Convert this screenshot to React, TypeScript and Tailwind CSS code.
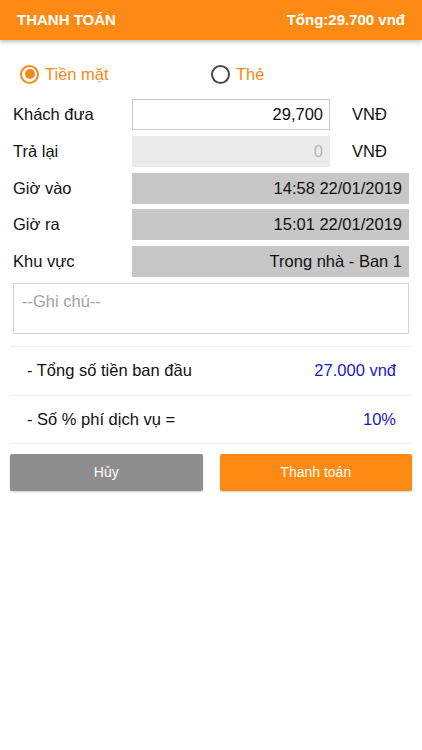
import React from "react";

function Radio({ checked, label }: { checked: boolean; label: string }) {
  return (
    <div className="flex items-center gap-[6px]">
      <div
        className={
          checked
            ? "w-[19px] h-[19px] rounded-full border-2 border-[#f8891b] flex items-center justify-center"
            : "w-[19px] h-[19px] rounded-full border-2 border-[#4a4a4a]"
        }
      >
        {checked && <div className="w-[10px] h-[10px] rounded-full bg-[#f8891b]" />}
      </div>
      <span className="text-[16.5px] text-[#f8891b]">{label}</span>
    </div>
  );
}

function Row({ label, children }: { label: string; children: React.ReactNode }) {
  return (
    <div className="flex items-center h-[31px]">
      <div className="w-[119px] text-[16.5px] text-[#111]">{label}</div>
      {children}
    </div>
  );
}

export default function App() {
  return (
    <div className="w-[422px] h-[750px] bg-white font-['Liberation_Sans',Arial,sans-serif] overflow-hidden">
      <div className="h-[40px] bg-[#fd8a14] flex items-center justify-between pl-[17px] pr-[17px] shadow-[0_2px_4px_rgba(0,0,0,0.25)] relative">
        <span className="text-white font-bold text-[15px]">THANH TOÁN</span>
        <span className="text-white font-bold text-[15px]">Tổng:29.700 vnđ</span>
      </div>

      <div className="flex items-center h-[20px] mt-[24px] pl-[20px]">
        <div className="w-[191px]">
          <Radio checked label="Tiền mặt" />
        </div>
        <Radio checked={false} label="Thẻ" />
      </div>

      <div className="flex flex-col gap-[5.75px] mt-[15px] pl-[13px] pr-[13px]">
        <Row label="Khách đưa">
          <div className="w-[198px] h-[31px] border border-[#c9c9c9] bg-white flex items-center justify-end pr-[6px] text-[16.5px] text-[#111]">
            29,700
          </div>
          <span className="ml-[22px] text-[16.5px] text-[#111]">VNĐ</span>
        </Row>
        <Row label="Trả lại">
          <div className="w-[198px] h-[31px] bg-[#ebebeb] flex items-center justify-end pr-[7px] text-[16.5px] text-[#b5b5b5]">
            0
          </div>
          <span className="ml-[22px] text-[16.5px] text-[#111]">VNĐ</span>
        </Row>
        <Row label="Giờ vào">
          <div className="flex-1 h-[31px] bg-[#c8c7c7] flex items-center justify-end pr-[7px] text-[16.5px] text-[#111]">
            14:58 22/01/2019
          </div>
        </Row>
        <Row label="Giờ ra">
          <div className="flex-1 h-[31px] bg-[#c8c7c7] flex items-center justify-end pr-[7px] text-[16.5px] text-[#111]">
            15:01 22/01/2019
          </div>
        </Row>
        <Row label="Khu vực">
          <div className="flex-1 h-[31px] bg-[#c8c7c7] flex items-center justify-end pr-[7px] text-[16.5px] text-[#111]">
            Trong nhà - Ban 1
          </div>
        </Row>
        <div className="h-[51px] border border-[#d4d4d4] pl-[8px] pt-[5px] text-[16.5px] text-[#a3a3a3]">
          --Ghi chú--
        </div>
      </div>

      <div className="mx-[10px] mt-[12px] border-t border-[#efefef]">
        <div className="h-[49px] flex items-center justify-between pl-[17px] pr-[16px] border-b border-[#efefef]">
          <span className="text-[16.5px] text-[#111]">- Tổng số tiền ban đầu</span>
          <span className="text-[16.5px] text-[#1b1bc4]">27.000 vnđ</span>
        </div>
        <div className="h-[48px] flex items-center justify-between pl-[17px] pr-[16px] border-b border-[#efefef]">
          <span className="text-[16.5px] text-[#111]">- Số % phí dịch vụ =</span>
          <span className="text-[16.5px] text-[#1b1bc4]">10%</span>
        </div>
      </div>

      <div className="flex gap-[17px] mx-[10px] mt-[10px]">
        <button className="flex-1 h-[37px] bg-[#8e8e8e] text-white text-[14px] rounded-[2px] shadow-[0_1px_2px_rgba(0,0,0,0.2)]">
          Hủy
        </button>
        <button className="flex-1 h-[37px] bg-[#fd8a12] text-white text-[14px] rounded-[2px] shadow-[0_1px_2px_rgba(0,0,0,0.2)]">
          Thanh toán
        </button>
      </div>
    </div>
  );
}
